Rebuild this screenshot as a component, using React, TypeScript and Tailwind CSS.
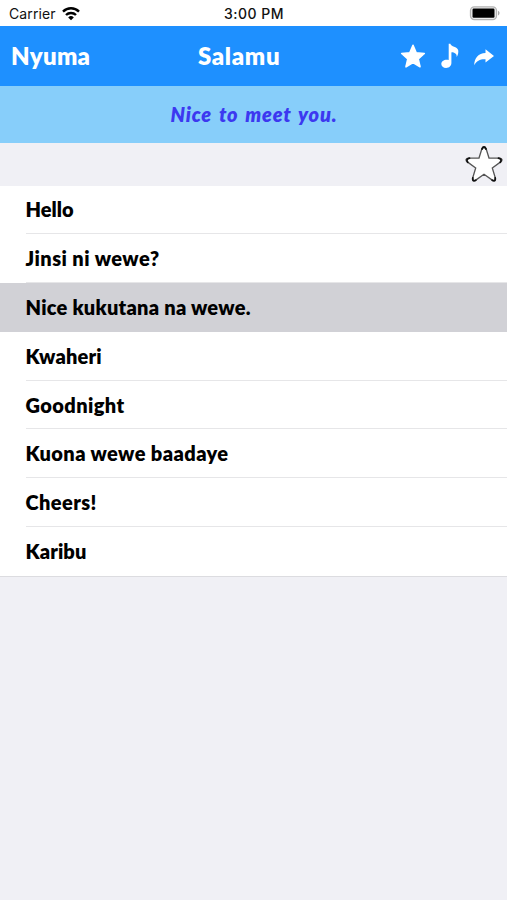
const rows = [
  { text: "Hello", tracking: "tracking-[0px]" },
  { text: "Jinsi ni wewe?", tracking: "tracking-[0.45px]" },
  { text: "Nice kukutana na wewe.", tracking: "tracking-[0.25px]", selected: true },
  { text: "Kwaheri", tracking: "tracking-[0.2px]" },
  { text: "Goodnight", tracking: "tracking-[0.4px]" },
  { text: "Kuona wewe baadaye", tracking: "tracking-[0.4px]" },
  { text: "Cheers!", tracking: "tracking-[0.4px]" },
  { text: "Karibu", tracking: "tracking-[0.1px]" },
];

function StatusBar() {
  return (
    <div className="grid h-[25.5px] grid-cols-3 items-center bg-white pl-[9px] pr-[7px] pt-[2px] font-['Inter',sans-serif] text-[#111]">
      <div className="flex items-center gap-[6px] text-[14px]">
        <span className="tracking-[0.1px]">Carrier</span>
        <svg width="18" height="14" viewBox="0 0 18 14" fill="none" stroke="#000" strokeWidth="2.4">
          <path d="M1 4.6a11.4 11.4 0 0 1 16 0" />
          <path d="M4 8a7.1 7.1 0 0 1 10 0" />
          <path d="M9 13.2 6.2 10.4a4 4 0 0 1 5.6 0Z" fill="#000" stroke="none" />
        </svg>
      </div>
      <div className="-ml-[1px] text-center text-[14px] font-medium tracking-[0.5px]">3:00 PM</div>
      <div className="flex justify-end">
        <svg width="31" height="15" viewBox="0 0 31 15">
          <rect x="1.5" y="0.8" width="26" height="12.8" rx="3.8" fill="#eee" stroke="#b4b4b4" strokeWidth="1.3" />
          <rect x="3.5" y="2.6" width="22" height="9.2" rx="1.2" fill="#000" />
          <path d="M29 4.8c2 .8 2 3.8 0 4.6z" fill="#aaa" />
        </svg>
      </div>
    </div>
  );
}

function NavBar() {
  return (
    <div className="flex h-[60.5px] items-center bg-[#1e90ff] pl-[11px] pr-[12px] pt-[1px] text-[24px] font-extrabold text-white">
      <div className="w-[187px] tracking-[0.3px]">Nyuma</div>
      <div className="flex-1 tracking-[0.65px]">Salamu</div>
      <svg width="95" height="28" viewBox="400 42 95 28" fill="#fff">
        <path
          d="M413 45.3 416.2 52.8 424.3 53.5 418.2 58.9 420 66.8 413 62.6 406 66.8 407.8 58.9 401.7 53.5 409.8 52.8Z"
          stroke="#fff"
          strokeWidth="1.6"
          strokeLinejoin="round"
        />
        <path d="M448.7 43.8h1.7c.4 3.3 6.900 2.700 7.800 6.400.4 2.100-.2 4.900-1.500 6.700.3-3.400-2.200-4.300-5.300-4.600V63.100c0 3-2.300 4.900-5.300 4.900-2.800 0-4.800-1.500-4.800-3.900 0-2.700 2.500-4.400 5.300-4.400.8 0 1.500.1 2.100.4Z" />
        <path d="M485.500 49.300 494 56 485.500 62.600V59.200C480 59 476.700 60.600 474.200 65.300 474.400 57.800 478.400 53.400 485.500 53Z" />
      </svg>
    </div>
  );
}

export default function App() {
  return (
    <div className="flex h-[900px] w-[507px] flex-col overflow-hidden bg-[#f0f0f5] font-['Lato','Noto_Sans',sans-serif]">
      <StatusBar />
      <NavBar />
      <div className="flex h-[56.5px] items-center justify-center bg-[#87cefa] pl-[1px] text-[20px] font-extrabold italic tracking-[0.8px] text-[#3c38f0] [word-spacing:2px]">
        Nice to meet you.
      </div>
      <div className="flex h-[43px] items-center justify-end pr-[4px]">
        <svg width="38" height="38" viewBox="0 0 38 38">
          <path
            d="M19 2c1.200 0 1.800 1 2.200 2L24 13l10.500.2c2.700.1 3.300 2.200 1.200 3.700L27.300 23l3.100 10.200c.6 2.500-.9 3.400-2.800 2.200L19 29.300l-8.600 6.100c-1.900 1.200-3.400.3-2.800-2.200L10.700 23l-8.400-6.100C.2 15.400.8 13.300 3.500 13.200L14 13l2.800-9C17.200 3 17.800 2 19 2Z"
            fill="#fff"
            stroke="#555"
            strokeWidth="1.3"
          />
          <path
            d="M17 4q2-4 4 0M33.500 13.200q4 .8 1.800 4M30.200 33q.4 3.800-3 2.200M10.800 35.200q-3.400 1.600-3-2.200M2.700 17.200q-2.200-3.200 1.800-4"
            fill="none"
            stroke="#111"
            strokeWidth="1.8"
            strokeLinecap="round"
          />
        </svg>
      </div>
      <ul className="border-b border-[#dcdce0] bg-white">
        {rows.map((row, i) => (
          <li
            key={row.text}
            className={`flex h-[48.8px] ${row.selected ? "bg-[#d1d1d6]" : "bg-white"}`}
          >
            <div
              className={`ml-[25.5px] flex flex-1 items-center text-[20px] font-extrabold text-black ${row.tracking} ${
                i < rows.length - 1 && !row.selected ? "border-b border-[#e6e6e8]" : ""
              }`}
            >
              {row.text}
            </div>
          </li>
        ))}
      </ul>
    </div>
  );
}
